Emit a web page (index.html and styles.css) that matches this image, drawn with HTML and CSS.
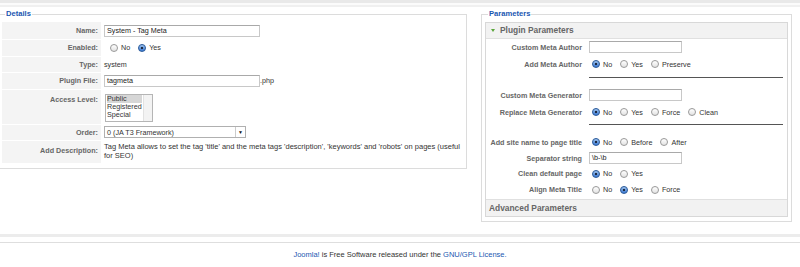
FILE: index.html
```html
<!DOCTYPE html>
<html lang="en">
<head>
  <meta charset="UTF-8" />
  <title>Plugin Manager: System - Tag Meta</title>
  <link rel="stylesheet" href="styles.css">
</head>
<body>

  <div class="topbar"></div>

  <div class="main">
    <fieldset class="box details">
      <legend>Details</legend>
      <table class="admintable">
        <tr class="r-name">
          <td class="key">Name:</td>
          <td><div class="input wide">System - Tag Meta</div></td>
        </tr>
        <tr class="r-row">
          <td class="key">Enabled:</td>
          <td class="choices">
            <span class="radio"></span><span class="opt">No</span>
            <span class="radio on"></span><span class="opt">Yes</span>
          </td>
        </tr>
        <tr class="r-row">
          <td class="key">Type:</td>
          <td>system</td>
        </tr>
        <tr class="r-name">
          <td class="key">Plugin File:</td>
          <td><div class="input wide">tagmeta</div>.php</td>
        </tr>
        <tr class="r-access">
          <td class="key top">Access Level:</td>
          <td>
            <div class="listbox">
              <div class="options">
                <div class="sel">Public</div>
                <div>Registered</div>
                <div>Special</div>
              </div>
              <div class="scroll"></div>
            </div>
          </td>
        </tr>
        <tr class="r-row">
          <td class="key">Order:</td>
          <td>
            <div class="dropdown">
              <span>0 (JA T3 Framework)</span>
              <span class="arrow">&#9660;</span>
            </div>
          </td>
        </tr>
        <tr class="r-desc">
          <td class="key top">Add Description:</td>
          <td class="desc">Tag Meta allows to set the tag 'title' and the meta tags 'description', 'keywords' and 'robots' on pages (useful for SEO)</td>
        </tr>
      </table>
    </fieldset>

    <fieldset class="box params">
      <legend>Parameters</legend>
      <div class="pane">
        <div class="pane-title"><span class="tri"></span>Plugin Parameters</div>
        <table class="paramlist">
          <tr class="h16">
            <td class="pkey">Custom Meta Author</td>
            <td><div class="input short"></div></td>
          </tr>
          <tr class="h18">
            <td class="pkey">Add Meta Author</td>
            <td>
              <span class="radio on"></span><span class="opt">No</span>
              <span class="radio"></span><span class="opt">Yes</span>
              <span class="radio"></span><span class="opt">Preserve</span>
            </td>
          </tr>
          <tr class="p-sep">
            <td></td>
            <td class="rule"><hr></td>
          </tr>
          <tr class="h18">
            <td class="pkey">Custom Meta Generator</td>
            <td><div class="input short"></div></td>
          </tr>
          <tr class="h16">
            <td class="pkey">Replace Meta Generator</td>
            <td>
              <span class="radio on"></span><span class="opt">No</span>
              <span class="radio"></span><span class="opt">Yes</span>
              <span class="radio"></span><span class="opt">Force</span>
              <span class="radio"></span><span class="opt">Clean</span>
            </td>
          </tr>
          <tr class="p-sep">
            <td></td>
            <td class="rule"><hr></td>
          </tr>
          <tr class="h18">
            <td class="pkey">Add site name to page title</td>
            <td>
              <span class="radio on"></span><span class="opt">No</span>
              <span class="radio"></span><span class="opt">Before</span>
              <span class="radio"></span><span class="opt">After</span>
            </td>
          </tr>
          <tr class="h14">
            <td class="pkey">Separator string</td>
            <td><div class="input short">\b-\b</div></td>
          </tr>
          <tr class="h17">
            <td class="pkey">Clean default page</td>
            <td>
              <span class="radio on"></span><span class="opt">No</span>
              <span class="radio"></span><span class="opt">Yes</span>
            </td>
          </tr>
          <tr class="h15">
            <td class="pkey">Align Meta Title</td>
            <td>
              <span class="radio"></span><span class="opt">No</span>
              <span class="radio on"></span><span class="opt">Yes</span>
              <span class="radio"></span><span class="opt">Force</span>
            </td>
          </tr>
        </table>
        <div class="pane-title closed">Advanced Parameters</div>
      </div>
    </fieldset>
  </div>

  <div class="footer">
    <a href="#">Joomla!</a> is Free Software released under the <a href="#">GNU/GPL License.</a>
  </div>

</body>
</html>
```

FILE: styles.css
```css
body {
  font-family: 'Liberation Sans', Arial, sans-serif;
  font-size: 7.2px;
  color: #333;
  background: #fff;
  margin: 0;
  overflow: hidden;
}

a {
  color: #1b57b1;
  text-decoration: none;
}

.topbar {
  height: 3px;
  background: #e9e9e9;
  border-bottom: 2px solid #fbfbfb;
  box-shadow: 0 2px 0 #f0f0f0;
}

.main {
  display: flex;
  align-items: flex-start;
  margin-top: 4px;
}

/* fieldsets */
.box {
  box-sizing: border-box;
  border: 1px solid #dcdcdc;
  margin: 0;
  padding: 0 2px 4px 2px;
  min-width: 0;
}

.box legend {
  color: #1b57b1;
  font-weight: bold;
  font-size: 7.6px;
  line-height: 10px;
  padding: 0 1px;
  margin-left: 3px;
}

.details {
  width: 468px;
  margin-left: -1px;
  height: 160px;
}

.params {
  width: 311px;
  margin-left: 14px;
  height: 213px;
  padding: 0 3px 2px 3px;
}

/* details table */
.admintable {
  border-collapse: collapse;
  width: 463px;
  margin-top: 3px;
}

.admintable td {
  padding: 0 0 0 3px;
  vertical-align: middle;
}

.admintable td.key {
  width: 96px;
  padding: 0 3px 0 0;
  text-align: right;
  background: #f4f4f4;
  border-bottom: 1px solid #fff;
  color: #666;
  font-weight: bold;
}

.admintable td.top {
  vertical-align: top;
  padding-top: 5px;
}

.admintable td.choices {
  padding-left: 6px;
}

.r-name { height: 17px; }
.r-row { height: 16px; }
.r-row:nth-child(2) { height: 17px; }
.r-access { height: 35px; }
.r-desc { height: 23px; }

.input {
  display: inline-block;
  box-sizing: border-box;
  height: 12px;
  line-height: 10px;
  border: 1px solid #c8c8c8;
  border-top-color: #a9a9a9;
  padding: 0 2px;
  vertical-align: middle;
  background: #fff;
  color: #222;
}

.input.wide { width: 156px; }
.input.short { width: 93px; }

.radio {
  display: inline-block;
  box-sizing: border-box;
  width: 8px;
  height: 8px;
  border-radius: 50%;
  border: 1px solid #9a9a9a;
  background: linear-gradient(#fff, #e2e2e2);
  vertical-align: middle;
  margin: 0 3px 0 3px;
}

.radio.on {
  border-color: #2e5c99;
  background: radial-gradient(circle, #1c2a40 0 1.3px, transparent 1.6px), linear-gradient(#9fc4f0, #3a7ad6);
}

.opt {
  vertical-align: middle;
  margin-right: 3px;
}

.listbox {
  display: flex;
  width: 48px;
  height: 28px;
  box-sizing: border-box;
  border: 1px solid #b5b5b5;
  margin: 2px 0 0 1px;
  background: #fff;
  line-height: 8.4px;
}

.listbox .options {
  flex: 1;
  padding: 0 1px;
}

.listbox .sel {
  background: #d6d6d6;
}

.listbox .scroll {
  width: 8px;
  background: #f3f3f3;
  border-left: 1px solid #e2e2e2;
}

.dropdown {
  display: flex;
  justify-content: space-between;
  align-items: center;
  box-sizing: border-box;
  width: 142px;
  height: 12px;
  border: 1px solid #b0b0b0;
  padding-left: 2px;
  background: #fff;
}

.dropdown .arrow {
  width: 9px;
  height: 10px;
  line-height: 10px;
  font-size: 5px;
  text-align: center;
  border-left: 1px solid #ccc;
  color: #111;
}

.admintable td.desc {
  vertical-align: top;
  padding: 3px 2px 0 3px;
  font-size: 7.5px;
  line-height: 8.5px;
}

/* parameters pane */
.pane {
  border: 1px solid #d8d8d8;
  margin-top: 3px;
}

.pane-title {
  height: 15px;
  line-height: 15px;
  background: #f2f2f2;
  border-bottom: 1px solid #e0e0e0;
  font-size: 8.4px;
  font-weight: bold;
  color: #666;
  padding-left: 5px;
}

.pane-title .tri {
  display: inline-block;
  width: 0;
  height: 0;
  border-left: 2.5px solid transparent;
  border-right: 2.5px solid transparent;
  border-top: 3px solid #5aa63a;
  margin-right: 5px;
  vertical-align: middle;
}

.pane-title.closed {
  height: 16px;
  line-height: 16px;
  border-top: 1px solid #e0e0e0;
  border-bottom: none;
  padding-left: 3px;
}

.paramlist {
  border-collapse: collapse;
  width: 100%;
  margin: 0 0 2px 0;
}

.paramlist td {
  padding: 0 0 0 4px;
  vertical-align: middle;
}

.paramlist td.pkey {
  width: 96px;
  text-align: right;
  padding: 0 3px 0 0;
  font-weight: bold;
  color: #666;
  white-space: nowrap;
}

.h14 { height: 14px; }
.h15 { height: 15px; }
.h16 { height: 16px; }
.h17 { height: 17px; }
.h18 { height: 18px; }

.p-sep { height: 13px; }

.paramlist td.rule {
  vertical-align: top;
  padding-top: 4px;
}

.paramlist hr {
  border: none;
  border-top: 1px solid #555;
  margin: 0 4px 0 0;
}

/* footer */
.footer {
  margin-top: 12px;
  border-top: 3px solid #ececec;
  padding-top: 13px;
  text-align: center;
  font-size: 7.5px;
}

.footer::before {
  content: "";
  display: block;
  border-top: 1px solid #dedede;
  margin-top: -8px;
  margin-bottom: 7px;
}
```
